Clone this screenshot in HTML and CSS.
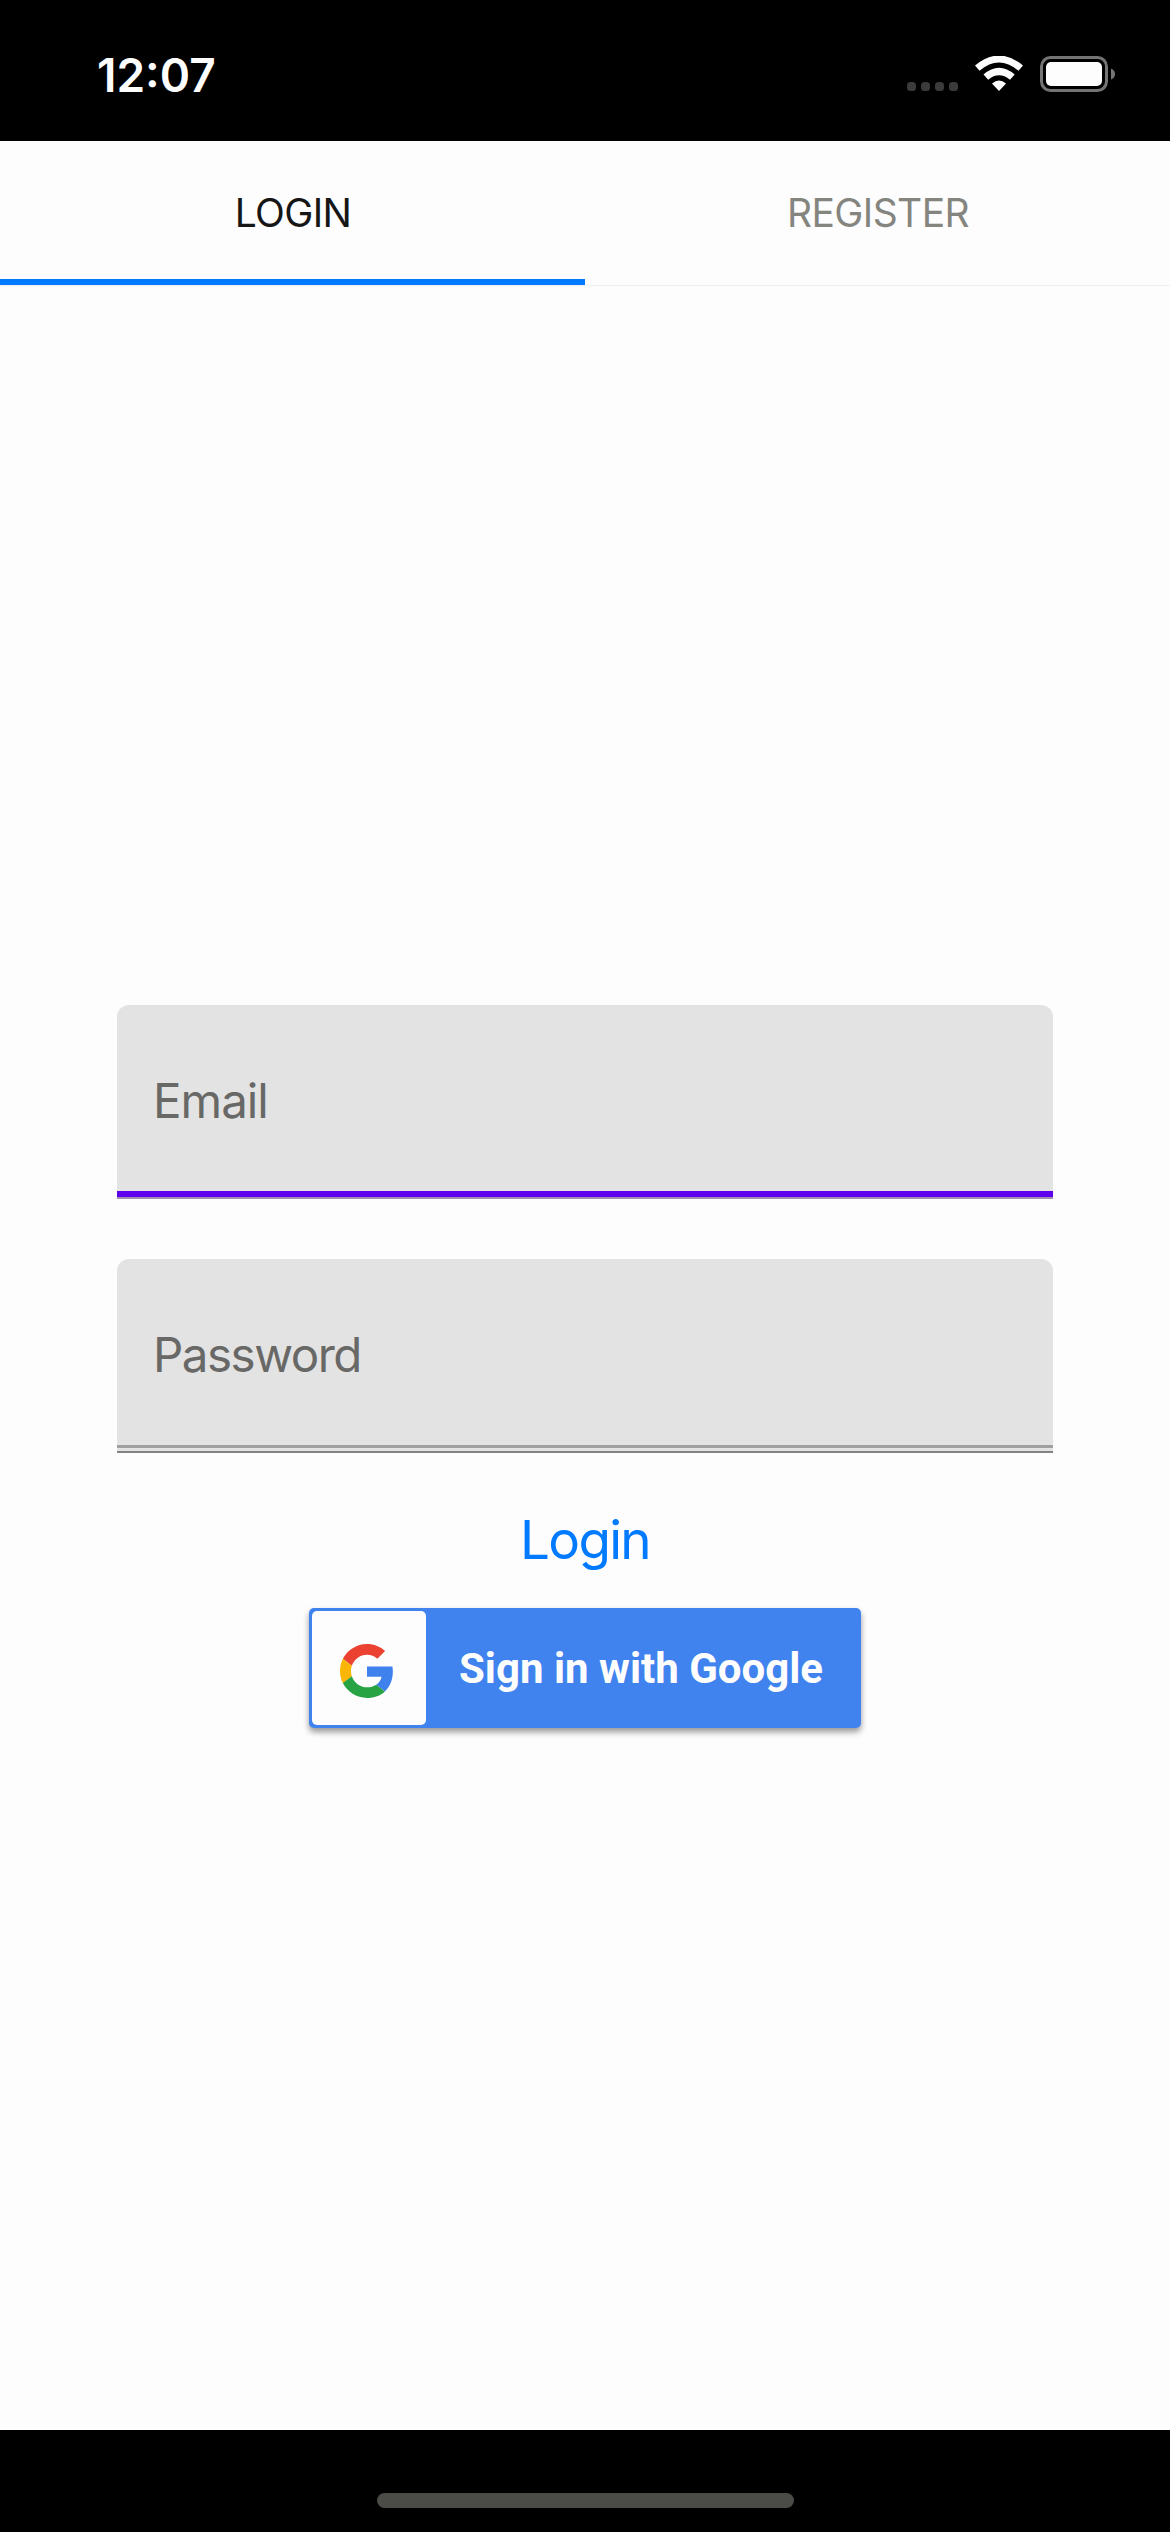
FILE: index.html
```html
<!DOCTYPE html>
<html lang="en">
<head>
<meta charset="utf-8">
<title>Login</title>
<link rel="stylesheet" href="styles.css">
</head>
<body>
<div class="screen">
  <header class="status">
    <span class="time">12:07</span>
    <svg class="status-icons" width="210" height="40" viewBox="0 0 210 40">
      <g fill="#3b3b3b">
        <rect x="0" y="26" width="9" height="9" rx="3.5"/>
        <rect x="14" y="26" width="9" height="9" rx="3.5"/>
        <rect x="28" y="26" width="9" height="9" rx="3.5"/>
        <rect x="42" y="26" width="9" height="9" rx="3.5"/>
      </g>
      <g fill="#fdfdfd">
        <path d="M68 9.500Q92 -10.500 116 9.500L111.500 14.800Q92 -1.800 72.500 14.800Z"/>
        <path d="M76.500 18.500Q92 5 107.700 18.500L103 23.700Q92 14.800 81.200 23.700Z"/>
        <path d="M85 27.500Q92 21.500 99 27.500L92 35Z"/>
      </g>
      <rect x="134.500" y="1.500" width="65" height="33" rx="9" fill="none" stroke="#747474" stroke-width="3"/>
      <rect x="139" y="6" width="56" height="24" rx="5" fill="#fdfdfd"/>
      <path d="M204 12.500Q208 14 208 18T204 23.500Z" fill="#747474"/>
    </svg>
  </header>
  <nav class="tabs">
    <a class="tab tab-active"><span>LOGIN</span></a>
    <a class="tab"><span>REGISTER</span></a>
  </nav>
  <main class="form">
    <div class="field field-focus"><span class="email">Email</span></div>
    <div class="field field-rest"><span class="password">Password</span></div>
    <a class="login"><span>Login</span></a>
    <div class="google">
      <div class="logo">
        <svg width="54" height="54" viewBox="0 0 48 48">
          <path fill="#ea4130" d="M24 9.500c3.540 0 6.710 1.220 9.210 3.600l6.850-6.850C35.900 2.380 30.470 0 24 0 14.620 0 6.510 5.380 2.560 13.220l7.980 6.190C12.430 13.720 17.740 9.500 24 9.500z"/>
          <path fill="#3f82ee" d="M46.980 24.550c0-1.570-.15-3.090-.38-4.550H24v9.020h12.940c-.58 2.960-2.260 5.480-4.780 7.180l7.730 6c4.510-4.180 7.090-10.360 7.090-17.650z"/>
          <path fill="#fbb605" d="M10.530 28.590c-.48-1.450-.76-2.990-.76-4.590s.27-3.140.76-4.590l-7.980-6.190C.92 16.460 0 20.120 0 24c0 3.880.92 7.540 2.560 10.780l7.970-6.190z"/>
          <path fill="#27a344" d="M24 48c6.480 0 11.930-2.130 15.890-5.810l-7.730-6c-2.150 1.450-4.920 2.300-8.160 2.300-6.260 0-11.570-4.220-13.470-9.910l-7.980 6.190C6.510 42.620 14.620 48 24 48z"/>
        </svg>
      </div>
      <div class="google-label"><span>Sign in with Google</span></div>
    </div>
  </main>
  <footer class="home"><div class="home-bar"></div></footer>
</div>
</body>
</html>
```
FILE: styles.css
```css
* { box-sizing: border-box; }
body { margin: 0; background: #000; font-family: Inter, "Liberation Sans", sans-serif; }
.screen { width: 1170px; height: 2532px; display: flex; flex-direction: column; background: #fdfdfd; }
span { white-space: nowrap; }
.status { height: 141px; flex: none; background: #000; display: flex; justify-content: space-between; align-items: flex-start; padding: 0 53px 0 97px; }
.time { margin-top: 47px; font-size: 46px; line-height: 56px; font-weight: 600; color: #fdfdfd; }
.status-icons { margin-top: 56px; }
.tabs { height: 145px; flex: none; display: flex; border-bottom: 1px solid #eeeef4; }
.tab { flex: 1; display: flex; justify-content: center; padding: 48px 0 0 1px; font-size: 39px; line-height: 48px; letter-spacing: -0.6px; color: #85857f; }
.tab-active { height: 144px; color: #161616; border-bottom: 6px solid #007aff; }
.form { flex: 1; display: flex; flex-direction: column; align-items: center; padding-top: 719px; }
.field { width: 936px; height: 194px; flex: none; padding: 67px 0 0 36px; border-radius: 12px 12px 0 0; background: #e3e3e3; color: #686866; font-size: 47.5px; line-height: 58px; }
.email { letter-spacing: -1px; }
.password { letter-spacing: -1.5px; }
.field-focus { box-shadow: inset 0 -2px #a28fb0, inset 0 -8px #5f00ee; margin-bottom: 60px; }
.field-rest { box-shadow: inset 0 -2px #828282, inset 0 -5px #e3e3e3, inset 0 -8px #a0a0a0; }
.login { margin-top: 54px; height: 66px; font-size: 53px; line-height: 66px; letter-spacing: -1.7px; color: #007aff; }
.google { width: 552px; height: 120px; margin-top: 35px; padding: 3px; display: flex; border-radius: 5px; background: #4083ef; box-shadow: 0 4px 6px rgba(0,0,0,.4); }
.logo { width: 114px; height: 114px; flex: none; border-radius: 5px; background: #fdfdfd; display: flex; padding: 33px 0 0 28px; }
.google-label { padding: 33px 0 0 33px; font-family: Roboto, sans-serif; font-weight: 700; font-size: 42px; line-height: 50px; color: #fdfdfd; }
.home { height: 102px; flex: none; background: #000; display: flex; justify-content: center; padding-top: 63px; }
.home-bar { width: 417px; height: 15px; border-radius: 8px; background: #4b4b48; }
```
